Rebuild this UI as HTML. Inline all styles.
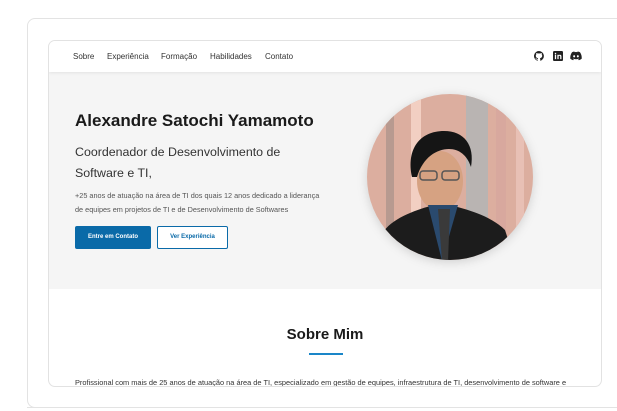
<!DOCTYPE html>
<html><head><meta charset="utf-8"><style>
*{margin:0;padding:0;box-sizing:border-box}
body{width:617px;height:411px;background:#fff;font-family:"Liberation Sans",sans-serif;position:relative;overflow:hidden}
.outer{position:absolute;left:27px;top:18px;width:620px;height:390px;border:1px solid #e3e3e3;border-radius:8px;background:#fff}
.card{position:absolute;left:48px;top:40px;width:554px;height:347px;border:1px solid #e2e2e2;border-radius:7px;overflow:hidden;background:#fff}
.nav{position:absolute;left:0;top:0;width:100%;height:31px;background:#fff;box-shadow:0 1px 3px rgba(0,0,0,.08);z-index:2}
.nav span{position:absolute;top:11px;font-size:8px;color:#333}
.hero{position:absolute;left:0;top:31px;width:100%;height:217px;background:#f5f5f5}
.t{position:absolute;white-space:nowrap}
</style></head><body>
<div class="outer"></div>
<div class="card">
 <div class="nav">
  <span style="left:24px">Sobre</span><span style="left:58px">Experiência</span><span style="left:112px">Formação</span><span style="left:161px">Habilidades</span><span style="left:216px">Contato</span>
  <svg style="position:absolute;left:485px;top:10px" width="10" height="10" viewBox="0 0 16 16"><path fill="#222" d="M8 0a8 8 0 0 0-2.5 15.6c.4 0 .5-.2.5-.4v-1.5c-2.2.5-2.7-1-2.7-1-.4-.9-.9-1.2-.9-1.2-.7-.5.1-.5.1-.5.8.1 1.2.8 1.2.8.7 1.3 1.9.9 2.3.7.1-.5.3-.9.5-1.1-1.8-.2-3.6-.9-3.6-4 0-.9.3-1.6.8-2.100-.1-.2-.4-1 .1-2.1 0 0 .7-.2 2.2.8a7.5 7.5 0 0 1 4 0c1.5-1 2.2-.8 2.2-.8.4 1.1.2 1.9.1 2.1.5.6.8 1.3.8 2.1 0 3.1-1.9 3.8-3.6 4 .3.3.5.8.5 1.5v2.2c0 .2.1.5.6.4A8 8 0 0 0 8 0z"/></svg>
  <svg style="position:absolute;left:504px;top:10px" width="10" height="10" viewBox="0 0 16 16"><rect width="16" height="16" rx="2" fill="#222"/><rect x="3" y="6" width="2" height="7" fill="#fff"/><circle cx="4" cy="4" r="1.2" fill="#fff"/><path d="M7 6h2v1c.5-.8 1.3-1.1 2.2-1.1 1.7 0 2.3 1 2.3 2.8V13h-2V9c0-.9-.3-1.4-1.1-1.4S9 8.2 9 9v4H7z" fill="#fff"/></svg>
  <svg style="position:absolute;left:521px;top:10px" width="12" height="10" viewBox="0 0 24 18"><path fill="#222" d="M20 1.5A19 19 0 0 0 15.3 0l-.6 1.2a18 18 0 0 0-5.4 0L8.7 0A19 19 0 0 0 4 1.5C1 6 .2 10.3.6 14.6A19 19 0 0 0 6.4 17.5l1.2-2a12 12 0 0 1-1.9-.9l.5-.4a13.5 13.5 0 0 0 11.6 0l.5.4-1.9.9 1.2 2a19 19 0 0 0 5.8-2.9C23.9 9.6 22.6 5.3 20 1.5zM8.3 11.9c-1.1 0-2-1-2-2.3s.9-2.3 2-2.3 2 1 2 2.3-.9 2.3-2 2.3zm7.4 0c-1.1 0-2-1-2-2.3s.9-2.3 2-2.3 2 1 2 2.3-.9 2.3-2 2.3z"/></svg>
 </div>
 <div class="hero">
  <div class="t" style="left:26px;top:39px;font-size:17px;font-weight:bold;color:#1a1a1a">Alexandre Satochi Yamamoto</div>
  <div class="t" style="left:26px;top:70px;font-size:12.4px;color:#333;line-height:21px">Coordenador de Desenvolvimento de<br>Software e TI,</div>
  <div class="t" style="left:26px;top:117px;font-size:7.3px;color:#555;line-height:14px">+25 anos de atuação na área de TI dos quais 12 anos dedicado a liderança<br>de equipes em projetos de TI e de Desenvolvimento de Softwares</div>
  <div class="t" style="left:26px;top:154px;width:76px;height:23px;background:#0a6aa8;border-radius:2px;color:#fff;font-size:6px;font-weight:bold;text-align:center;line-height:23px">Entre em Contato</div>
  <div class="t" style="left:108px;top:154px;width:71px;height:23px;border:1px solid #0a6aa8;border-radius:2px;background:#fff;color:#0a6aa8;font-size:6px;font-weight:bold;text-align:center;line-height:21px">Ver Experiência</div>
  <svg style="position:absolute;left:317px;top:21px;filter:drop-shadow(0 2px 5px rgba(0,0,0,.15))" width="168" height="168" viewBox="0 0 168 168">
   <defs><clipPath id="c"><circle cx="84" cy="84" r="83"/></clipPath></defs>
   <g clip-path="url(#c)">
    <rect width="168" height="168" fill="#dcae9f"/>
    <rect x="20" width="8" height="168" fill="#b89a90"/><rect x="45" width="10" height="168" fill="#f2cfc2"/><rect x="100" width="22" height="168" fill="#b9b4b2"/><rect x="130" width="10" height="168" fill="#d8a89e"/><rect x="150" width="8" height="168" fill="#e8c0b5"/>
    <ellipse cx="74" cy="88" rx="23" ry="30" fill="#d6a282"/>
    <path d="M46 84c-6-28 8-46 32-46 20 0 31 14 27 36-4-12-12-18-22-18-12 0-26 8-32 28z" fill="#151515"/>
    <rect x="54" y="78" width="17" height="9" rx="3" fill="none" stroke="#555" stroke-width="1.5"/><rect x="76" y="78" width="17" height="9" rx="3" fill="none" stroke="#555" stroke-width="1.5"/>
    <path d="M10 168l8-30c10-14 35-22 50-26l16 0c15 4 40 10 55 25l10 31z" fill="#1c1c1c"/>
    <path d="M62 112l14 56 16-56z" fill="#2a4a6e"/>
    <path d="M72 116l4 52 6 0 2-52z" fill="#3a3a3a"/>
   </g>
  </svg>
 </div>
 <div class="t" style="left:0;width:100%;top:285px;text-align:center;font-size:15px;font-weight:bold;color:#1a1a1a">Sobre Mim</div>
 <div style="position:absolute;left:260px;top:312px;width:34px;height:2px;background:#1a86c8"></div>
 <div class="t" style="left:26px;top:337px;font-size:7.4px;color:#333">Profissional com mais de 25 anos de atuação na área de TI, especializado em gestão de equipes, infraestrutura de TI, desenvolvimento de software e</div>
</div>
<div style="position:absolute;left:27px;top:407px;width:600px;height:1px;background:#e3e3e3"></div>
</body></html>
